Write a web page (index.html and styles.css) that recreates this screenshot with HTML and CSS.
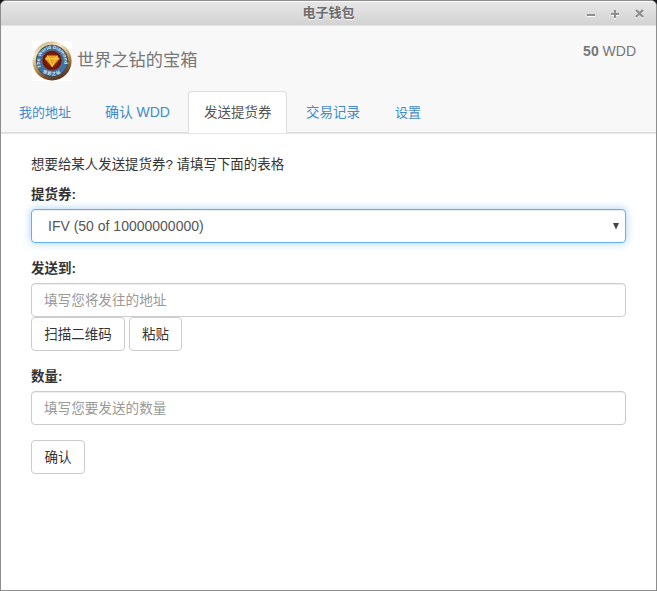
FILE: index.html
```
<!DOCTYPE html>
<html lang="zh-CN">
<head>
<meta charset="utf-8">
<title>电子钱包</title>
<link rel="stylesheet" href="styles.css">
</head>
<body>
<div class="window">
  <div class="titlebar">
    <span class="window-title">电子钱包</span>
    <svg class="controls" width="60" height="12" viewBox="0 0 60 12">
      <g fill="none" stroke="#fff" stroke-width="2" transform="translate(0 1)"><path d="M1 7h8M25 6h8M29 2v8M50 2l7 7M57 2l-7 7"/></g>
      <g fill="none" stroke="#8f8f8f" stroke-width="2"><path d="M1 7h8M25 6h8M29 2v8"/><path d="M50 2l7 7M57 2l-7 7" stroke-width="2.4"/></g>
    </svg>
  </div>
  <header class="header">
    <div class="brand-row">
      <svg class="logo" width="40" height="40" viewBox="0 0 40 40">
        <defs>
          <linearGradient id="rim" x1=".2" y1="0" x2=".6" y2="1"><stop offset="0" stop-color="#c0a468"/><stop offset=".25" stop-color="#f8efcf"/><stop offset=".5" stop-color="#c9a869"/><stop offset=".8" stop-color="#80552c"/><stop offset="1" stop-color="#54331b"/></linearGradient>
          <radialGradient id="core"><stop offset="0" stop-color="#b23a16"/><stop offset="1" stop-color="#5c0f0b"/></radialGradient>
          <path id="top-arc" d="M9.2 26A12.3 12.3 0 1 1 30.8 26"/>
          <path id="bottom-arc" d="M10.5 31.5Q20 37 29.5 31.5"/>
        </defs>
        <path fill="#fff" d="M0 0h40v40H0z"/>
        <circle cx="20" cy="20" r="19.6" fill="url(#rim)"/>
        <circle cx="20" cy="20" r="15.9" fill="#3a72ab" stroke="#3b3b40" stroke-width=".8"/>
        <circle cx="20" cy="19.5" r="10" fill="url(#core)" stroke="#7b5a4a" stroke-width=".8"/>
        <text class="seal-text"><textPath href="#top-arc" textLength="47">The World Diamond</textPath></text>
        <text class="seal-text seal-cjk"><textPath href="#bottom-arc" textLength="19">世界之钻</textPath></text>
        <path fill="#e8a51e" d="M15.3 14.5h9.8l2.4 3.3-7.3 8.2-7.3-8.2z"/>
        <path fill="none" stroke="#ffd95a" stroke-width=".7" d="M13 17.8h14.4M15.3 14.5l1.6 3.3 3.3 8 3.3-8 1.6-3.3"/>
      </svg>
      <h1 class="brand">世界之钻的宝箱</h1>
      <div class="balance"><b>50</b> WDD</div>
    </div>
    <nav class="tabs">
      <a class="tab tab-address">我的地址</a>
      <a class="tab tab-confirm">确认 WDD</a>
      <a class="tab tab-send active">发送提货券</a>
      <a class="tab tab-history">交易记录</a>
      <a class="tab tab-settings">设置</a>
    </nav>
  </header>
  <main class="content">
    <p class="intro">想要给某人发送提货券? 请填写下面的表格</p>
    <label class="label">提货券:</label>
    <div class="control select"><span>IFV (50 of 10000000000)</span><svg width="6" height="7" viewBox="0 0 6 7"><path fill="#444" d="M0 0h6L3 6.5z"/></svg></div>
    <label class="label">发送到:</label>
    <div class="control placeholder">填写您将发往的地址</div>
    <div class="actions"><button class="btn btn-scan">扫描二维码</button><button class="btn btn-paste">粘贴</button></div>
    <label class="label">数量:</label>
    <div class="control placeholder">填写您要发送的数量</div>
    <button class="btn btn-ok">确认</button>
  </main>
</div>
</body>
</html>
```
FILE: styles.css
```
* { box-sizing: border-box; }
body { margin: 0; background: #18181c; font: 14px/20px "Liberation Sans", "Noto Sans CJK SC", sans-serif; color: #333; }
.window { width: 657px; height: 591px; border: 1px solid #8e8e8e; border-radius: 6px 6px 0 0; background: #fff; overflow: hidden; }
.titlebar { position: relative; height: 25px; border-top: 1px solid #fff; border-bottom: 1px solid #e4e4e4; background: linear-gradient(#e6e6e6, #d3d3d3); text-align: center; }
.window-title { font-size: 13px; line-height: 22px; font-weight: 700; color: #6c6c6c; text-shadow: 0 1px #f5f5f5; }
.controls { position: absolute; right: 10px; top: 6px; }
.header { height: 108px; background: #f8f8f8; border-bottom: 1px solid #e7e7e7; }
.brand-row { display: flex; height: 65px; padding: 15px 20px 0 31px; }
.logo { flex: none; }
.seal-text { font-size: 4.8px; font-weight: bold; fill: #e4e9df; }
.seal-cjk { font-size: 4.2px; }
.brand { margin: 9px 0 0 5px; font-size: 17.2px; line-height: 20px; font-weight: 400; color: #777; }
.balance { margin-left: auto; color: #777; }
.tabs { display: flex; height: 42px; padding-left: 2px; gap: 2px; border-bottom: 1px solid #ddd; }
.tab { height: 42px; padding: 11px 15px 9px; border: 1px solid transparent; border-radius: 4px 4px 0 0; color: #428bca; white-space: nowrap; }
.tab-address { width: 84px; font-size: 13px; }
.tab-confirm { width: 97px; padding-top: 10px; font-size: 14px; letter-spacing: -.1px; }
.tab-send { width: 99px; font-size: 13.5px; }
.tab-history { width: 87px; padding-left: 16px; font-size: 13.5px; }
.tab-settings { padding-left: 16px; font-size: 13px; }
.tab.active { background: #fff; color: #555; border-color: #ddd #ddd #fff; }
.content { padding: 21px 30px 0; }
.intro { margin: 0 0 9px; font-size: 13.45px; }
.label { display: block; height: 20px; padding-top: 1px; margin-bottom: 5px; font-size: 13.5px; font-weight: 700; }
.intro + .label { padding-top: 1px; }
.control { display: flex; align-items: center; height: 34px; padding: 0 12px; border: 1px solid #ccc; border-radius: 4px; background: #fff; color: #555; box-shadow: inset 0 1px 1px rgba(0,0,0,.075); }
.select { justify-content: space-between; margin-bottom: 15px; padding: 0 6px 0 16px; border-color: #66afe9; box-shadow: inset 0 1px 1px rgba(0,0,0,.075), 0 0 8px rgba(102,175,233,.6); }
.placeholder { padding-top: 2px; font-size: 13.6px; color: #999; }
.actions { display: flex; gap: 4px; margin-bottom: 15px; }
.btn { height: 34px; padding: 2px 12px 0; border: 1px solid #ccc; border-radius: 4px; background: #fff; color: #333; font: 13.5px/20px "Liberation Sans", "Noto Sans CJK SC", sans-serif; text-align: center; white-space: nowrap; }
.btn-scan { width: 94px; }
.btn-paste { width: 53px; }
.btn-ok { width: 54px; margin-top: 15px; }
```
